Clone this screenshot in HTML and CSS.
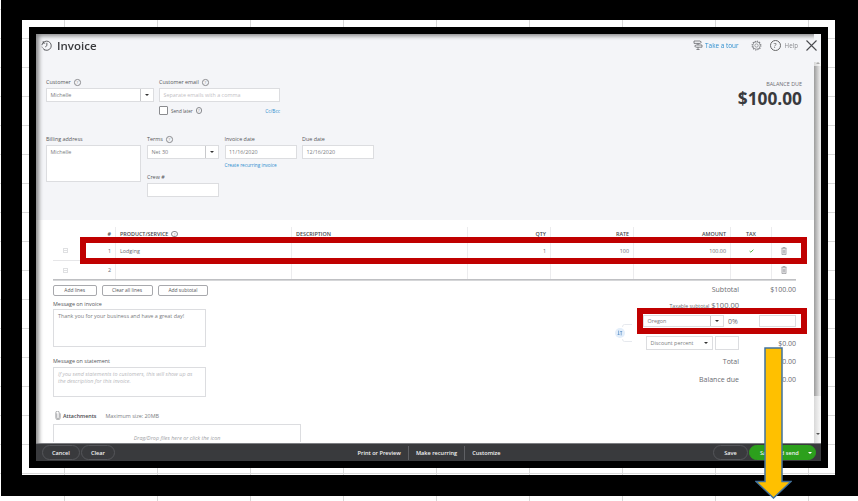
FILE: index.html
```html
<!DOCTYPE html>
<html lang="en">
<head>
    <meta charset="UTF-8">
    <title>Invoice</title>
    <link rel="stylesheet" href="styles.css">
</head>
<body>
    <div class="outer-frame">
        <div class="inner-frame">
            <div class="screen">
                <div class="scroll-row">
                    <div class="main">
                        <div class="head">
                            <div class="title-row">
                                <div class="title">
                                    <svg class="history-icon" viewBox="0 0 12 12"><path d="M2.200 3.200A5 5 0 1 1 2 9M1 5.600A5 5 0 0 1 2.200 3.200M2.400 1.200V3.400H4.600M6.400 3V6.200L4.600 7.600M1 7.400L1.400 8.200M3.400 10.400L4.200 10.800" /></svg>
                                    <h1>Invoice</h1>
                                </div>
                                <div class="tools">
                                    <svg class="tour-icon" viewBox="0 0 10 10"><path d="M1 1H7L8.400 2.200 7 3.400H1ZM3 5H9V7.200H3L1.600 6.100ZM5 3.400V5M5 7.200V9.600M3.400 9.600H6.600" /></svg>
                                    <span class="tour-link">Take a tour</span>
                                    <svg class="gear-icon" viewBox="0 0 12 12"><circle cx="6" cy="6" r="1.800" /><circle cx="6" cy="6" r="4" /><circle class="gear-teeth" cx="6" cy="6" r="4.800" /></svg>
                                    <span class="help-circle">?</span>
                                    <span class="help-text">Help</span>
                                    <svg class="close-icon" viewBox="0 0 11 11"><path d="M.5.5L10.500 10.500M10.500.5L.5 10.500" /></svg>
                                </div>
                            </div>
                            <div class="head-body">
                                <div class="head-form">
                                    <div class="form-row">
                                        <div class="field field-customer">
                                            <label>Customer <span class="q">?</span></label>
                                            <div class="select"><span>Michelle</span><b class="caret-box"><i class="caret"></i></b></div>
                                        </div>
                                        <div class="field field-email">
                                            <label>Customer email <span class="q">?</span></label>
                                            <div class="input placeholder">Separate emails with a comma</div>
                                            <div class="send-row">
                                                <span class="checkbox"></span>
                                                <span class="send-label">Send later</span>
                                                <span class="q">?</span>
                                                <a class="cc-link">Cc/Bcc</a>
                                            </div>
                                        </div>
                                    </div>
                                    <div class="form-row second-row">
                                        <div class="field field-billing">
                                            <label>Billing address</label>
                                            <div class="input address">Michelle</div>
                                        </div>
                                        <div class="field field-short">
                                            <label>Terms <span class="q">?</span></label>
                                            <div class="select"><span>Net 30</span><b class="caret-box"><i class="caret"></i></b></div>
                                            <label class="crew-label">Crew #</label>
                                            <div class="input"></div>
                                        </div>
                                        <div class="field field-short">
                                            <label>Invoice date</label>
                                            <div class="input">11/16/2020</div>
                                            <a class="recurring-link">Create recurring invoice</a>
                                        </div>
                                        <div class="field field-short">
                                            <label>Due date</label>
                                            <div class="input">12/16/2020</div>
                                        </div>
                                    </div>
                                </div>
                                <div class="balance">
                                    <div class="balance-label">BALANCE DUE</div>
                                    <div class="balance-amount">$100.00</div>
                                </div>
                            </div>
                        </div>

                        <div class="lines">
                            <div class="line line-header">
                                <div class="cell"></div>
                                <div class="cell right">#</div>
                                <div class="cell">PRODUCT/SERVICE <span class="q">?</span></div>
                                <div class="cell">DESCRIPTION</div>
                                <div class="cell right">QTY</div>
                                <div class="cell right">RATE</div>
                                <div class="cell right">AMOUNT</div>
                                <div class="cell center">TAX</div>
                                <div class="cell"></div>
                            </div>
                            <div class="line">
                                <div class="cell center"><span class="grip"></span></div>
                                <div class="cell right">1</div>
                                <div class="cell">Lodging</div>
                                <div class="cell"></div>
                                <div class="cell right">1</div>
                                <div class="cell right">100</div>
                                <div class="cell right">100.00</div>
                                <div class="cell center"><svg class="check-icon" viewBox="0 0 6 5"><path d="M.6 2.600L2.200 4 5.400.8" /></svg></div>
                                <div class="cell center"><svg class="trash-icon" viewBox="0 0 6 8"><path d="M.4 1.300H5.600M2 1.200V.4H4V1.200M1 1.600V7.600H5V1.600M2.300 2.600V6.600M3.700 2.600V6.600" /></svg></div>
                            </div>
                            <div class="line line-last">
                                <div class="cell center"><span class="grip"></span></div>
                                <div class="cell right">2</div>
                                <div class="cell"></div>
                                <div class="cell"></div>
                                <div class="cell"></div>
                                <div class="cell"></div>
                                <div class="cell"></div>
                                <div class="cell"></div>
                                <div class="cell center"><svg class="trash-icon" viewBox="0 0 6 8"><path d="M.4 1.300H5.600M2 1.200V.4H4V1.200M1 1.600V7.600H5V1.600M2.300 2.600V6.600M3.700 2.600V6.600" /></svg></div>
                            </div>
                        </div>

                        <div class="below">
                            <div class="below-left">
                                <div class="line-buttons">
                                    <button class="btn btn-add">Add lines</button>
                                    <button class="btn btn-clear">Clear all lines</button>
                                    <button class="btn btn-sub">Add subtotal</button>
                                </div>
                                <label class="msg-label msg-label-first">Message on invoice</label>
                                <div class="message msg-invoice">Thank you for your business and have a great day!</div>
                                <label class="msg-label statement-label">Message on statement</label>
                                <div class="message msg-statement">If you send statements to customers, this will show up as the description for this invoice.</div>
                                <div class="attach-row">
                                    <svg class="clip-icon" viewBox="0 0 6 9"><path d="M1.800 2.400V6.400A1.200 1.200 0 0 0 4.200 6.400V1.800A1.700 1.700 0 0 0 .8 1.800V6.600A2.200 2.200 0 0 0 5.200 6.600V2.400" /></svg>
                                    <span class="attach-title">Attachments</span>
                                    <span class="attach-size">Maximum size: 20MB</span>
                                </div>
                                <div class="dropzone">Drag/Drop files here or click the icon</div>
                            </div>
                            <div class="totals">
                                <div class="total-row subtotal"><span>Subtotal</span><span>$100.00</span></div>
                                <div class="total-row taxable"><span><small>Taxable subtotal</small> $100.00</span><span></span></div>
                                <div class="tax-group">
                                    <svg class="switch-icon" viewBox="0 0 18 18"><circle cx="5" cy="9" r="5" /><path class="bracket" d="M17 .5H9.500Q7.500.5 7.500 3M17 17.500H9.500Q7.500 17.500 7.500 15" /><path class="swap" d="M3.600 6.600V11M2.600 10L3.600 11 4.600 10M6.200 11.400V7M5.200 8L6.200 7 7.200 8" /></svg>
                                    <div class="tax-rows">
                                        <div class="tax-row">
                                            <div class="select select-tax"><span>Oregon</span><b class="caret-box"><i class="caret"></i></b></div>
                                            <span class="tax-rate">0%</span>
                                            <div class="input input-tax"></div>
                                        </div>
                                        <div class="discount-row">
                                            <div class="select select-discount"><span>Discount percent</span><b class="caret-plain"><i class="caret"></i></b></div>
                                            <div class="input input-discount"></div>
                                            <span class="discount-amount">$0.00</span>
                                        </div>
                                    </div>
                                </div>
                                <div class="total-row total"><span>Total</span><span>$0.00</span></div>
                                <div class="total-row balance-row"><span>Balance due</span><span>$0.00</span></div>
                            </div>
                        </div>

                        <div class="shade"></div>
                        <div class="callout callout-line"></div>
                        <div class="callout callout-tax"></div>
                    </div>
                    <div class="scrollbar">
                        <i class="scroll-up"></i>
                        <div class="scroll-thumb"></div>
                        <i class="scroll-down"></i>
                    </div>
                </div>
                <div class="footer">
                    <div class="footer-left">
                        <span class="pill">Cancel</span>
                        <span class="pill">Clear</span>
                    </div>
                    <div class="footer-center">
                        <span>Print or Preview</span>
                        <span>Make recurring</span>
                        <span>Customize</span>
                    </div>
                    <div class="footer-right">
                        <span class="pill pill-save">Save</span>
                        <span class="pill pill-send">Save and send <i class="caret caret-white"></i></span>
                    </div>
                </div>
            </div>
        </div>
    </div>
    <svg class="arrow" viewBox="0 0 37 152"><path d="M10 1H27V134.500H36L18.500 151 1 134.500H10Z" /></svg>
</body>
</html>
```
FILE: styles.css
```css
* { margin: 0; padding: 0; box-sizing: border-box; }
html, body { height: 501px; overflow: hidden; }
body {
    position: relative;
    font-family: "Open Sans", sans-serif;
    font-size: 5.4px;
    color: #6b6c72;
    background-color: #fff;
    background-image: linear-gradient(90deg, #d9d9d9 1px, transparent 1px), linear-gradient(#d9d9d9 1px, transparent 1px);
    background-size: 93px 100%, 100% 29px;
    background-position: 64px 0, 0 9px;
}

/* frames around the screenshot */
.outer-frame { width: 857px; height: 496px; margin-left: 1px; border: solid #000; border-width: 20px 23px 21px 21px; padding: 7px; }
.inner-frame { height: 441px; border: 7px solid #000; }
.screen { height: 100%; display: flex; flex-direction: column; filter: blur(.35px); }
.scroll-row { flex: 1; display: flex; min-height: 0; }
.main { position: relative; z-index: 1; flex: 1; background: #fff; }

/* scrollbar */
.scrollbar { width: 7px; display: flex; flex-direction: column; align-items: center; padding-top: 28px; background: linear-gradient(#f4f5f8, #f4f5f8) top / 100% 28px no-repeat, linear-gradient(90deg, #d8d8d8, #fafafa); }
.scroll-thumb { width: 100%; height: 330px; margin-top: 2px; background: linear-gradient(90deg, #9c9c9c, #e8e8e8 85%); }
.scroll-up { width: 0; height: 0; border: 2px solid transparent; border-top: 0; border-bottom: 2px solid #aaa; }
.scroll-down { width: 0; height: 0; margin-top: 37px; border: 2px solid transparent; border-bottom: 0; border-top: 2px solid #555; }

/* top part */
.head { height: 186px; background: #f4f5f8; }
.title-row { height: 22px; display: flex; justify-content: space-between; align-items: center; margin-right: -3px; padding-left: 5px; }
.title { display: flex; align-items: center; gap: 5px; }
.title h1 { font-size: 11.5px; font-weight: 600; color: #393a3d; }
.history-icon { width: 11px; height: 11px; fill: none; stroke: #55565a; stroke-width: 1; }
.tools { display: flex; align-items: center; }
.tour-icon { width: 10px; height: 10px; fill: none; stroke: #55565a; stroke-width: .7; }
.tour-link { margin-left: 2px; font-size: 6.4px; color: #2d8ecf; }
.gear-icon { width: 11px; height: 11px; margin-left: 12px; fill: none; stroke: #77787c; stroke-width: .7; }
.gear-teeth { stroke-width: 1.1; stroke-dasharray: 1.4 1.1; }
.help-circle { width: 11px; height: 11px; margin-left: 8px; border: 1px solid #666; border-radius: 50%; font-size: 7px; line-height: 9px; text-align: center; color: #555; }
.help-text { margin-left: 4px; font-size: 6.2px; color: #8a8b8f; }
.close-icon { width: 11px; height: 11px; margin-left: 8px; fill: none; stroke: #4a4b4f; stroke-width: 1.1; }

.head-body { display: flex; justify-content: space-between; padding: 22px 12px 0 10px; }
.form-row { display: flex; }
.second-row { margin-top: 20px; }
.field label, .msg-label { display: block; height: 9px; margin-bottom: 1px; line-height: 9px; color: #55565a; }
.field-customer { width: 107.5px; margin-right: 5.5px; }
.field-email { width: 121px; }
.field-billing { width: 94.5px; margin-right: 6.5px; }
.field-short { width: 72px; margin-right: 5.5px; }
.crew-label { margin-top: 13.5px; }
.q { display: inline-block; width: 6.5px; height: 6.5px; margin-left: 2px; border: .5px solid #8a8b8f; border-radius: 50%; font-size: 4px; font-weight: 400; line-height: 5.5px; text-align: center; vertical-align: middle; color: #8a8b8f; }

.input, .select { height: 14px; display: flex; align-items: center; background: #fff; border: 1px solid #dcdde0; padding-left: 3.5px; color: #7a7b80; }
.select span { flex: 1; }
.caret-box { width: 13px; height: 100%; display: flex; align-items: center; justify-content: center; border-left: 1px solid #c8c9cc; }
.caret-plain { width: 13px; display: flex; justify-content: center; }
.caret { width: 0; height: 0; border: 2px solid transparent; border-bottom: 0; border-top: 2.5px solid #333; }
.placeholder { color: #bfc0c4; }
.address { height: 37px; align-items: flex-start; padding-top: 2px; }
.send-row { display: flex; align-items: center; margin-top: 4px; height: 9px; }
.checkbox { width: 9px; height: 9px; background: #fff; border: 1px solid #8a8b8f; border-radius: 1px; }
.send-label { margin-left: 3px; font-size: 4.6px; color: #55565a; }
.send-row .q { margin-left: 3px; }
.cc-link { margin-left: auto; font-size: 4.8px; color: #2d8ecf; }
.recurring-link { display: block; margin-top: 3px; font-size: 4.7px; color: #2d8ecf; }

.balance { margin-top: 3px; text-align: right; }
.balance-label { font-size: 5.4px; line-height: 7px; color: #6b6c72; }
.balance-amount { margin-top: 1px; font-size: 17.3px; font-weight: 700; line-height: 20px; color: #393a3d; }

/* product lines */
.lines { margin: 7px 18px 0 17px; }
.line { height: 20px; display: grid; grid-template-columns: 26px 37px 176px 176px 83px 83px 97px 41px 24px; border-bottom: 1px solid #e6e6e8; }
.line-header { height: 14px; border-bottom: 0; font-size: 5.4px; font-weight: 600; color: #48494d; }
.line-last { height: 19px; border-bottom: 1px solid #bfc0c3; box-shadow: 0 1px 0 #d5d6d8; }
.cell { display: flex; align-items: center; padding: 0 4px; border-right: 1px solid #ececee; }
.cell:first-child, .cell:last-child { border-right: 0; }
.cell .q { margin-left: 3px; }
.right { justify-content: flex-end; }
.center { justify-content: center; }
.grip { width: 5px; height: 5px; margin-right: 2px; border: 1px solid #dfe0e2; background: linear-gradient(#dfe0e2, #dfe0e2) center / 100% 1px no-repeat; }
.check-icon { width: 5px; height: 4px; fill: none; stroke: #2ca01c; stroke-width: 1; }
.trash-icon { width: 6px; height: 8px; fill: none; stroke: #8a8b8f; stroke-width: .7; }

/* below the lines */
.below { display: flex; justify-content: space-between; padding: 0 18px 0 17px; }
.below-left { width: 248px; }
.line-buttons { display: flex; margin-top: 5px; }
.btn { height: 10.5px; border: 1px solid #a8a9ad; border-radius: 2px; background: #fff; font-family: "Open Sans", sans-serif; font-size: 4.9px; color: #55565a; }
.btn-add { width: 43.5px; margin-right: 5px; }
.btn-clear { width: 51px; margin-right: 5.5px; }
.btn-sub { width: 50px; }
.msg-label-first { margin-top: 4.5px; margin-bottom: 0; }
.message { width: 153px; padding: 3px 4px; background: #fff; border: 1px solid #dcdde0; line-height: 7px; color: #7a7b80; }
.msg-invoice { height: 37.5px; }
.statement-label { margin-top: 10px; }
.msg-statement { height: 30.5px; font-style: italic; color: #b8b9bd; }
.attach-row { display: flex; align-items: center; height: 9px; margin-top: 14px; padding-left: 2px; }
.clip-icon { width: 6px; height: 9px; fill: none; stroke: #77787c; stroke-width: .6; }
.attach-title { margin-left: 2px; font-weight: 600; color: #48494d; }
.attach-size { margin-left: 9px; color: #7a7b80; }
.dropzone { height: 18px; margin-top: 4px; padding-top: 9px; border: 1px solid #dcdde0; border-bottom: 0; text-align: center; font-style: italic; color: #a0a1a5; }

.totals { width: 181px; font-size: 7px; color: #6b6c72; }
.total-row { display: grid; grid-template-columns: 1fr 57px; align-items: center; text-align: right; }
.subtotal { height: 18px; }
.taxable { height: 14px; margin-bottom: 3px; }
.taxable span { font-size: 7.5px; }
.taxable small { font-size: 5.2px; }
.total { height: 15px; margin-top: 4px; }
.balance-row { height: 15px; margin-top: 2.5px; }
.tax-group { display: flex; align-items: center; }
.switch-icon { width: 18px; height: 18px; flex: none; fill: #e3eefa; margin-right: 10px; }
.bracket { fill: none; stroke: #dfe3ea; stroke-width: .8; }
.swap { fill: none; stroke: #5a8fc8; stroke-width: .7; }
.tax-rows { flex: 1; font-size: 5.4px; }
.tax-row { display: flex; align-items: center; height: 12px; }
.select-tax { width: 81px; height: 12px; }
.tax-rate { width: 35px; padding-left: 4px; font-size: 7px; }
.input-tax { width: 37px; height: 12px; }
.discount-row { display: flex; align-items: center; height: 14px; margin-top: 9px; margin-left: 3px; }
.select-discount { width: 67px; }
.input-discount { width: 24px; margin-left: 2px; }
.discount-amount { margin-left: auto; font-size: 7px; }

/* footer bar */
.footer { height: 18px; display: grid; grid-template-columns: 1fr auto 1fr; align-items: center; padding: 0 5px 0 6px; background: #393a3d; border-top: 1px solid #7d7e82; font-size: 5.6px; font-weight: 600; color: #f2f2f2; }
.footer-left, .footer-right { display: flex; gap: 1px; }
.footer-right { justify-content: flex-end; }
.footer-center { display: flex; }
.footer-center span { padding: 3px 7px; border-left: 1px solid #5f6064; }
.footer-center span:first-child { border-left: 0; }
.pill { height: 15px; padding: 0 9px; display: flex; align-items: center; border: 1px solid #55565a; border-radius: 8px; }
.pill-save { width: 35px; justify-content: center; }
.pill-send { width: 67px; padding: 0 3px 0 10px; justify-content: space-between; background: #2ca01c; border-color: #2ca01c; }
.caret-white { border-top-color: #fff; }

/* annotations drawn on top */
.shade { position: absolute; inset: 0; box-shadow: inset 4px 3px 4px -1px rgba(0,0,0,.45); pointer-events: none; }
.callout { position: absolute; border: 6px solid #c00000; }
.callout-line { left: 44px; top: 203px; width: 727px; height: 27px; }
.callout-tax { left: 601px; top: 274px; width: 170px; height: 26px; }
.arrow { position: absolute; left: 755px; top: 347px; width: 37px; height: 152px; fill: #ffc000; stroke: #41719c; stroke-width: 1.5; }
```
